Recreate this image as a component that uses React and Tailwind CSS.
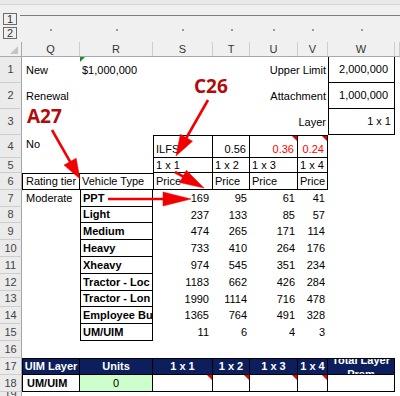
import React from 'react';

const GRID = 'grid grid-cols-[22px_58px_73px_60px_37px_48px_30px_67px_5px]';
const B = 'border-black';

const vehicles = [
  ['PPT', 169, 95, 61, 41],
  ['Light', 237, 133, 85, 57],
  ['Medium', 474, 265, 171, 114],
  ['Heavy', 733, 410, 264, 176],
  ['Xheavy', 974, 545, 351, 234],
  ['Tractor - Loc', 1183, 662, 426, 284],
  ['Tractor - Lon', 1990, 1114, 716, 478],
  ['Employee Bu', 1365, 764, 491, 328],
  ['UM/UIM', 11, 6, 4, 3],
];
const vehicleHeights = ['h-[17px]', 'h-[16px]', 'h-[17px]', 'h-[17px]', 'h-[17px]', 'h-[17px]', 'h-[16px]', 'h-[17px]', 'h-[17px]'];

function Cell({ className = '', children }) {
  return (
    <div className={`relative flex items-center min-w-0 overflow-hidden whitespace-nowrap ${className}`}>
      {children}
    </div>
  );
}

function Row({ n, h, children }) {
  return (
    <div className={`${GRID} ${h}`}>
      <div className="flex items-center justify-center overflow-hidden bg-[#ebebeb] border-r border-r-[#a3a3a3] border-b border-b-[#cdcdcd] text-[11px] text-[#444]">
        {n}
      </div>
      {children}
    </div>
  );
}

// red comment marker in the top right corner of a cell
const Note = () => (
  <span className="absolute top-0 right-0 border-t-[5px] border-l-[5px] border-t-[#e60000] border-l-transparent" />
);

function Arrow({ x1, y1, x2, y2, len = 20, w = 7 }) {
  const dx = x2 - x1;
  const dy = y2 - y1;
  const d = Math.hypot(dx, dy);
  const ux = dx / d;
  const uy = dy / d;
  const bx = x2 - ux * len;
  const by = y2 - uy * len;
  const px = -uy * w;
  const py = ux * w;
  return (
    <g fill="#f20000" stroke="#f20000">
      <line x1={x1} y1={y1} x2={bx + ux * 2} y2={by + uy * 2} strokeWidth="2.6" />
      <polygon points={`${x2},${y2} ${bx + px},${by + py} ${bx - px},${by - py}`} strokeWidth="0.5" />
    </g>
  );
}

export default function App() {
  return (
    <div className="relative w-[400px] h-[396px] overflow-hidden bg-white font-['Liberation_Sans',Arial,sans-serif] text-[11px] text-black leading-[13px]">
      {/* outline area */}
      <div className="h-[42px] bg-[#f0f0f0]">
        <div className="h-[5px] bg-[#e9e9e9] border-b border-[#d6d6d6]" />
        <div className={`${GRID} h-[37px]`}>
          <div className="flex flex-col gap-[2px] pt-[8px] pl-[3px]">
            <div className="flex h-[12px] w-[14px] items-center justify-center border border-[#6b6b6b] text-[11px] leading-none text-[#333]">1</div>
            <div className="flex h-[12px] w-[14px] items-center justify-center border border-[#6b6b6b] text-[11px] leading-none text-[#333]">2</div>
          </div>
          <div className="col-span-8 flex flex-col">
            <div className="mt-[10px] -ml-[2px] h-px bg-[#7d7d7d]" />
            <div className="mt-[13px] grid grid-cols-[58px_73px_60px_37px_48px_30px_67px_5px]">
              {[0, 1, 2, 3, 4, 5, 6].map((i) => (
                <div key={i} className="flex justify-center">
                  <span className="h-[2px] w-[2px] bg-[#9a9a9a]" />
                </div>
              ))}
            </div>
          </div>
        </div>
      </div>

      {/* column headers */}
      <div className={`${GRID} h-[15px] bg-[#f0f0f0] border-b border-[#a9a9a9] text-[11px] text-[#333]`}>
        <div className="relative border-r border-[#a9a9a9]">
          <span className="absolute bottom-[2px] right-[3px] border-b-[8px] border-l-[8px] border-b-[#c4c4c4] border-l-transparent" />
        </div>
        {['Q', 'R', 'S', 'T', 'U', 'V', 'W', ''].map((c, i) => (
          <div key={i} className="flex items-center justify-center border-r border-[#cdcdcd]">{c}</div>
        ))}
      </div>

      {/* sheet */}
      <Row n={1} h="h-[26px]">
        <Cell className="pl-[4px]">New</Cell>
        <Cell className="pl-[2px]">
          <span className="absolute top-0 left-0 border-t-[5px] border-r-[5px] border-t-[#1d8a35] border-r-transparent" />
          $1,000,000
        </Cell>
        <Cell />
        <Cell className="col-span-3 justify-end pr-[2px]">Upper Limit</Cell>
        <Cell className={`justify-end pr-[6px] border-l border-r border-b ${B}`}>2,000,000</Cell>
        <Cell />
      </Row>
      <Row n={2} h="h-[26px]">
        <Cell className="pl-[4px]">Renewal</Cell>
        <Cell />
        <Cell />
        <Cell className="col-span-3 justify-end pr-[2px]">Attachment</Cell>
        <Cell className={`justify-end pr-[6px] border-l border-r border-b ${B}`}>1,000,000</Cell>
        <Cell />
      </Row>
      <Row n={3} h="h-[26px]">
        <Cell />
        <Cell />
        <Cell />
        <Cell className="col-span-3 justify-end pr-[2px]">Layer</Cell>
        <Cell className={`justify-end pr-[3px] border-l border-r border-b ${B}`}>1 x 1</Cell>
        <Cell />
      </Row>
      <Row n={4} h="h-[23px]">
        <Cell className="items-start pt-[3px] pl-[4px]">No</Cell>
        <Cell />
        <Cell className={`items-end pb-[1px] pl-[2px] border-l border-t border-r border-b ${B}`}>ILFS</Cell>
        <Cell className={`items-end justify-end pb-[1px] pr-[3px] border-t border-r border-b ${B}`}>0.56</Cell>
        <Cell className={`items-end justify-end pb-[1px] pr-[3px] text-[#ff0000] border-t border-r border-b ${B}`}>
          <Note />0.36
        </Cell>
        <Cell className={`items-end justify-end pb-[1px] pr-[3px] text-[#ff0000] border-t border-r border-b ${B}`}>
          <Note />0.24
        </Cell>
        <Cell />
        <Cell />
      </Row>
      <Row n={5} h="h-[15px]">
        <Cell />
        <Cell />
        <Cell className={`pl-[2px] border-l border-r border-b ${B}`}>1 x 1</Cell>
        <Cell className={`pl-[2px] border-r border-b ${B}`}>1 x 2</Cell>
        <Cell className={`pl-[2px] border-r border-b ${B}`}>1 x 3</Cell>
        <Cell className={`pl-[2px] border-r border-b ${B}`}>1 x 4</Cell>
        <Cell />
        <Cell />
      </Row>
      <Row n={6} h="h-[17px]">
        <Cell className={`pl-[3px] border-l border-t border-r border-b ${B}`}>Rating tier</Cell>
        <Cell className={`pl-[2px] border-t border-b ${B}`}>Vehicle Type</Cell>
        <Cell className={`pl-[2px] border-l border-r border-b ${B}`}>Price</Cell>
        <Cell className={`pl-[2px] border-r border-b ${B}`}>Price</Cell>
        <Cell className={`pl-[2px] border-r border-b ${B}`}>Price</Cell>
        <Cell className={`pl-[2px] border-r border-b ${B}`}>Price</Cell>
        <Cell />
        <Cell />
      </Row>
      {vehicles.map(([name, a, b, c, d], i) => (
        <Row key={name} n={7 + i} h={vehicleHeights[i]}>
          <Cell className="pl-[4px]">{i === 0 ? 'Moderate' : ''}</Cell>
          <Cell className={`pl-[2px] font-bold border-l border-r border-b ${B}`}>{name}</Cell>
          <Cell className="justify-end pr-[4px]">{a}</Cell>
          <Cell className="justify-end pr-[3px]">{b}</Cell>
          <Cell className="justify-end pr-[3px]">{c}</Cell>
          <Cell className="justify-end pr-[3px]">{d}</Cell>
          <Cell />
          <Cell />
        </Row>
      ))}
      <Row n={16} h="h-[17px]">
        <Cell className="col-span-8" />
      </Row>
      <Row n={17} h="h-[17px]">
        {['UIM Layer', 'Units', '1 x 1', '1 x 2', '1 x 3', '1 x 4'].map((t, i) => (
          <Cell
            key={t}
            className={`justify-center bg-[#0c1f5c] text-white font-bold border-t border-b border-r ${i === 0 ? 'border-l' : ''} ${B}`}
          >
            {t}
          </Cell>
        ))}
        <div className={`flex items-center justify-center overflow-hidden bg-[#0c1f5c] text-white font-bold border-t border-b border-r ${B}`}>
          <div className="text-center leading-[14px] whitespace-normal">
            Total Layer
            <br />
            Prem
          </div>
        </div>
        <Cell />
      </Row>
      <Row n={18} h="h-[17px]">
        <Cell className={`pl-[4px] font-bold border-l border-r border-b ${B}`}>UM/UIM</Cell>
        <Cell className={`justify-center bg-[#ccffcc] border-r border-b ${B}`}>0</Cell>
        <Cell className={`border-r border-b ${B}`}><Note /></Cell>
        <Cell className={`border-r border-b ${B}`}><Note /></Cell>
        <Cell className={`border-r border-b ${B}`}><Note /></Cell>
        <Cell className={`border-r border-b ${B}`}><Note /></Cell>
        <Cell className={`border-r border-b ${B}`} />
        <Cell />
      </Row>
      <Row n={19} h="h-[6px]">
        <Cell className="col-span-8" />
      </Row>

      {/* annotations */}
      <div className="absolute left-[27px] top-[105px] font-['Open_Sans',sans-serif] text-[19px] font-bold leading-[22px] text-[#b00c0c]">
        A27
      </div>
      <div className="absolute left-[194px] top-[75px] font-['Open_Sans',sans-serif] text-[19px] font-bold leading-[22px] text-[#b00c0c]">
        C26
      </div>
      <svg className="absolute inset-0 pointer-events-none" width="400" height="396">
        <Arrow x1={52} y1={130} x2={80} y2={179} len={20} w={7} />
        <Arrow x1={208} y1={100} x2={176} y2={156} len={21} w={7} />
        <Arrow x1={175} y1={172} x2={204} y2={188} len={24} w={7} />
        <Arrow x1={108} y1={199} x2={191} y2={199} len={28} w={7} />
      </svg>
    </div>
  );
}
